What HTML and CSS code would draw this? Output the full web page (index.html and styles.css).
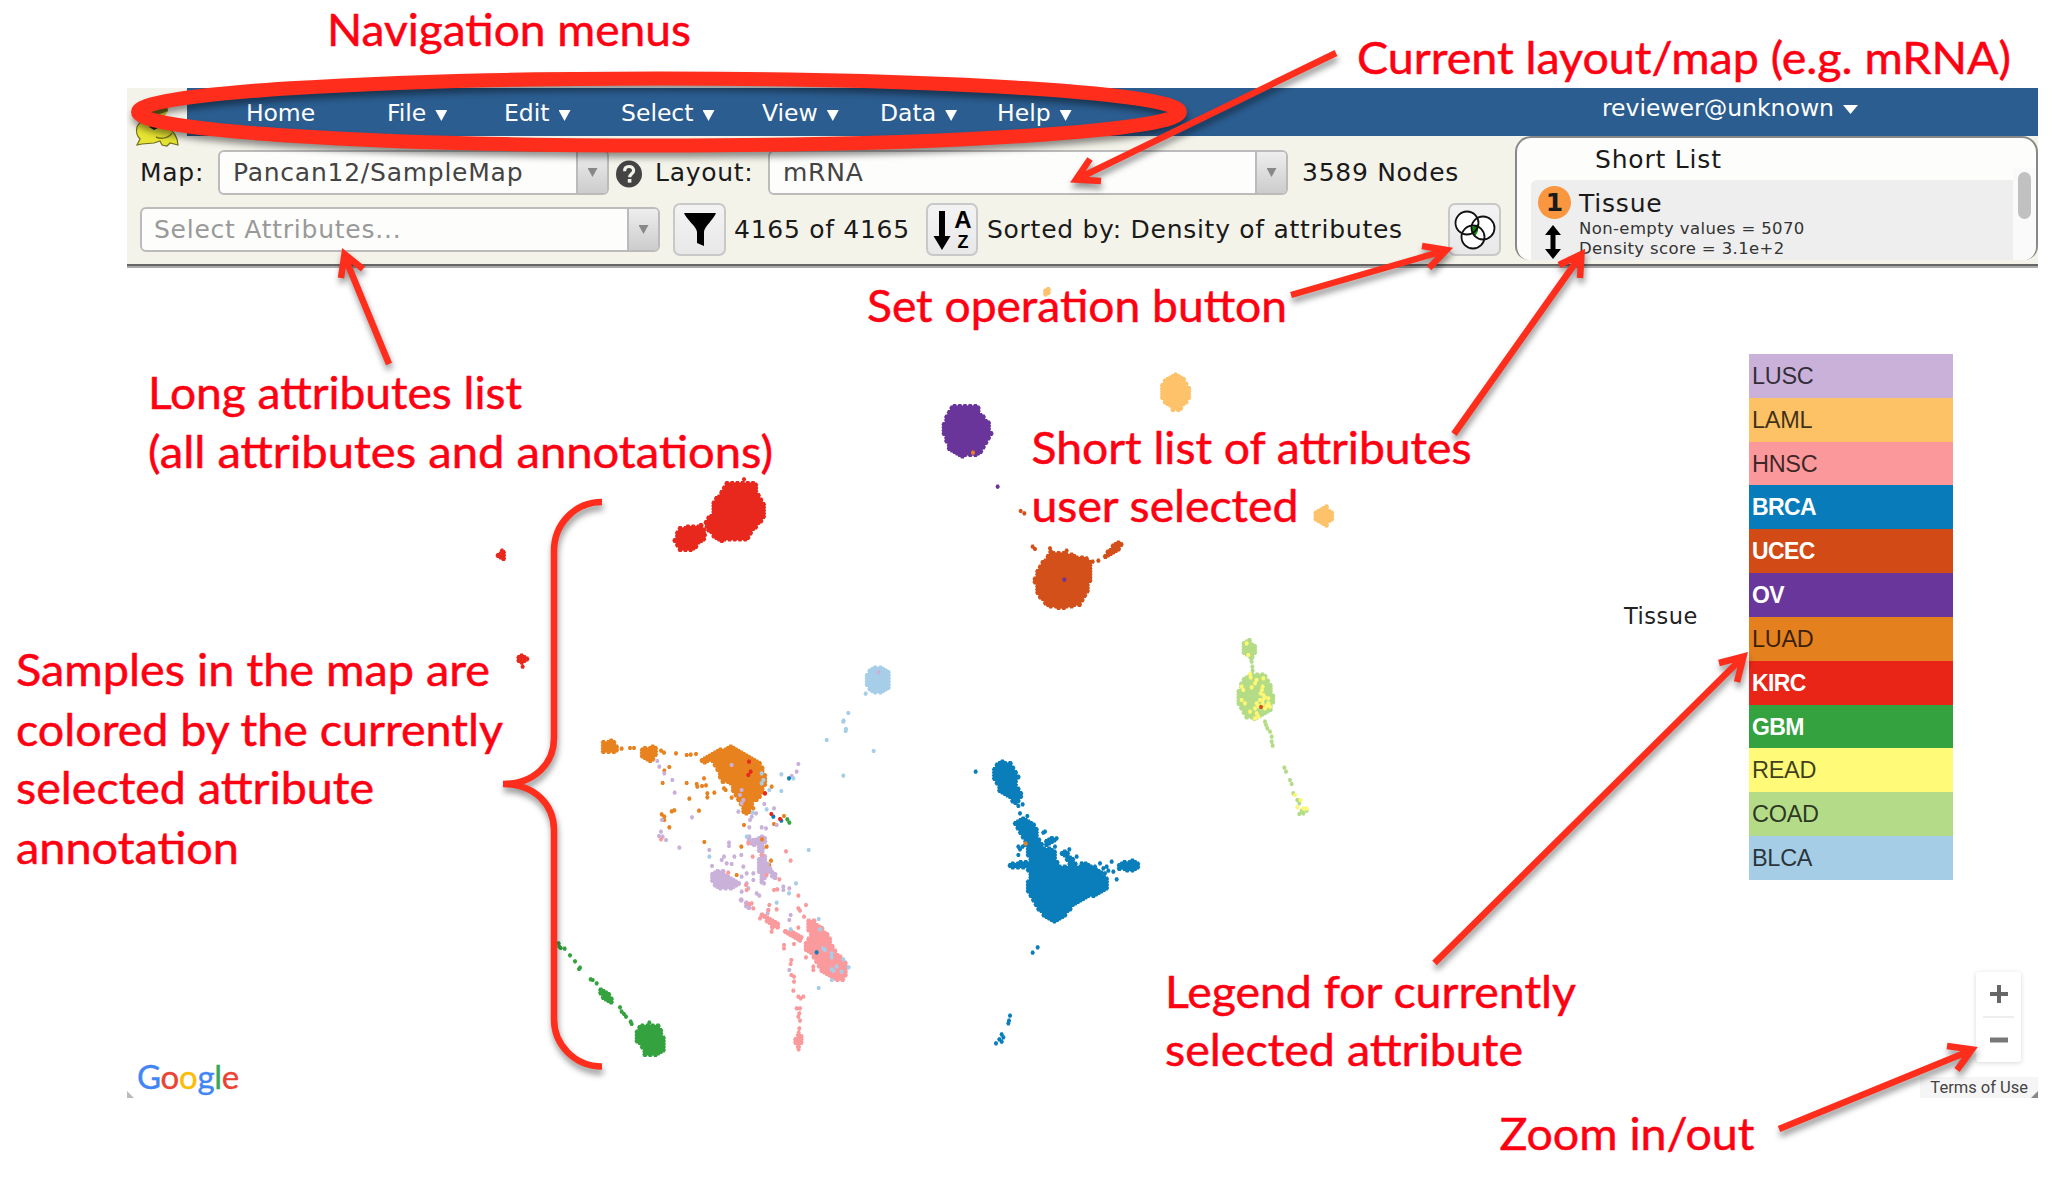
FILE: index.html
```html
<!DOCTYPE html>
<html lang="en">
<head>
<meta charset="utf-8">
<title>Tumor Map</title>
<link rel="stylesheet" href="styles.css">
</head>
<body>
<main class="page">
  <div class="app">
    <header class="header">
      <div class="topbar">
        <nav class="nav">
          <a class="nav-item home">Home</a>
          <a class="nav-item file">File<i class="caret"></i></a>
          <a class="nav-item edit">Edit<i class="caret"></i></a>
          <a class="nav-item select">Select<i class="caret"></i></a>
          <a class="nav-item view">View<i class="caret"></i></a>
          <a class="nav-item data">Data<i class="caret"></i></a>
          <a class="nav-item help">Help<i class="caret"></i></a>
        </nav>
        <div class="user">reviewer@unknown<i class="caret user-caret"></i></div>
      </div>
      <div class="toolbar">
        <div class="controls">
          <div class="row row-map">
            <span class="label map-label">Map:</span>
            <div class="combo combo-map"><span class="value">Pancan12/SampleMap</span><span class="drop"><i></i></span></div>
            <svg class="help-icon" viewBox="0 0 26 28"><ellipse cx="13" cy="14" rx="13" ry="13.5" fill="#444"/><path d="M8.6 11.2C8.6 7.8 10.5 6.5 13 6.5s4.600 1.500 4.600 4.200c0 3-3.900 3.200-3.900 6.500" fill="none" stroke="#f4f3ea" stroke-width="3.200"/><rect x="11.800" y="19" width="3.600" height="3.600" fill="#f4f3ea"/></svg>
            <span class="label layout-label">Layout:</span>
            <div class="combo combo-layout"><span class="value">mRNA</span><span class="drop"><i></i></span></div>
            <span class="label nodes">3589 Nodes</span>
          </div>
          <div class="row row-attr">
            <div class="combo combo-attr"><span class="value placeholder">Select Attributes...</span><span class="drop"><i></i></span></div>
            <button class="btn filter"><svg viewBox="0 0 32 34" width="32" height="34"><path d="M0 0H32C30 6 20 14 20 19V33L13 30V19C13 14 2 6 0 0Z"/></svg></button>
            <span class="label count">4165 of 4165</span>
            <button class="btn sort"><svg viewBox="0 0 20 42" width="20" height="42"><path d="M7 2H13V27H18.500L10 41 1.500 27H7Z"/></svg><span class="sort-letters"><b class="sort-a">A</b><b class="sort-z">Z</b></span></button>
            <span class="label sorted">Sorted by: Density of attributes</span>
            <button class="btn venn"><svg viewBox="0 0 42 40" width="42" height="40"><circle cx="13" cy="13" r="11.500" fill="#fff"/><circle cx="29" cy="18" r="11.500" fill="#fff"/><circle cx="19" cy="27" r="11.500" fill="#fff"/><path d="M17.600 17.500 24.500 13.800 24 21 21.500 26 17.800 22.500Z" fill="#0a8a0a"/><g fill="none" stroke="#111" stroke-width="1.800"><circle cx="13" cy="13" r="11.500"/><circle cx="29" cy="18" r="11.500"/><circle cx="19" cy="27" r="11.500"/></g></svg></button>
          </div>
        </div>
        <section class="shortlist">
          <h2 class="shortlist-title">Short List</h2>
          <div class="shortlist-body">
            <article class="entry">
              <div class="entry-icons">
                <span class="badge">1</span>
                <svg class="updown" viewBox="0 0 18 34" width="18" height="34"><path d="M9 0 17 10H11.500V24H17L9 34 1 24H6.500V10H1Z"/></svg>
              </div>
              <div class="entry-text">
                <div class="entry-name">Tissue</div>
                <div class="entry-meta m1">Non-empty values = 5070</div>
                <div class="entry-meta m2">Density score = 3.1e+2</div>
              </div>
            </article>
            <div class="scroll"><div class="thumb"></div></div>
          </div>
        </section>
      </div>
    </header>
    <div class="map">
      <div class="legend">
        <div class="legend-title">Tissue</div>
        <div class="legend-rows">
          <div class="lg lusc">LUSC</div>
          <div class="lg laml">LAML</div>
          <div class="lg hnsc">HNSC</div>
          <div class="lg brca strong">BRCA</div>
          <div class="lg ucec strong">UCEC</div>
          <div class="lg ov strong">OV</div>
          <div class="lg luad">LUAD</div>
          <div class="lg kirc strong">KIRC</div>
          <div class="lg gbm strong">GBM</div>
          <div class="lg read">READ</div>
          <div class="lg coad">COAD</div>
          <div class="lg blca">BLCA</div>
        </div>
      </div>
      <div class="zoom">
        <button class="zoom-btn"><svg viewBox="0 0 18 18" width="18" height="18"><path d="M7 0H11V7H18V11H11V18H7V11H0V7H7Z" fill="#666"/></svg></button>
        <button class="zoom-btn"><svg viewBox="0 0 18 18" width="18" height="18"><path d="M0 6.500H18V11.500H0Z" fill="#777"/></svg></button>
      </div>
      <div class="google"><span class="g-b">G</span><span class="g-r">o</span><span class="g-y">o</span><span class="g-b">g</span><span class="g-g">l</span><span class="g-r">e</span></div>
      <div class="terms">Terms of Use</div>
      <i class="corner"></i>
      <i class="corner corner-right"></i>
    </div>
  </div>
  <svg class="frog" viewBox="0 0 46 54"><path d="M13 22C13 14 20 12 24 8 30 6 36 12 34 18L30 24Z" fill="#c9c431"/><path d="M14 20 33 14 34 18 18 24Z" fill="#6d6a1c"/><path d="M3 34C6 26 18 26 28 31 36 34 40 38 43 46L44 52 36 50 33 53 28 52 26 48 20 50 8 51 3 52 6 46C2 42 2 38 3 34Z" fill="#e6e332" stroke="#6f6d20" stroke-width="1.200"/><path d="M18 31 26 34 20 37 15 34Z" fill="#222"/><path d="M22 44C28 47 36 44 38 40" fill="none" stroke="#77751f" stroke-width="1.500"/></svg>
  <svg class="overlay" id="samples" viewBox="0 0 2058 1192"></svg>
  <svg class="overlay" viewBox="0 0 2058 1192">
    <g class="marks">
      <ellipse cx="659" cy="112" rx="521" ry="33.500" stroke-width="14"/>
      <path d="M1336 53 1077 179M1090 159 1076 179.500 1101 181"/>
      <path d="M1291 295 1447 250M1422 246 1446.500 250 1429 268"/>
      <path d="M1454 434 1581 255M1559 265 1581.500 254 1580 278"/>
      <path d="M389 364 344 255M363 269 344.500 254 341 278"/>
      <path d="M1434.500 963 1743 657M1719 663 1743.500 656.500 1737 682"/>
      <path d="M1779 1129 1972 1050M1947 1046 1972 1049.500 1957 1070"/>
      <path d="M602 502C575 502 554 524 554 551V738C554 763 535 784 503 784 535 784 554 805 554 830V1019C554 1045 575 1066.500 602 1066.500"/>
    </g>
    <g class="notes">
      <text x="327" y="46" textLength="364" lengthAdjust="spacingAndGlyphs">Navigation menus</text>
      <text x="1357" y="73.500" textLength="654" lengthAdjust="spacingAndGlyphs">Current layout/map (e.g. mRNA)</text>
      <text x="867" y="321.500" textLength="420" lengthAdjust="spacingAndGlyphs">Set operation button</text>
      <text x="148" y="409" textLength="374" lengthAdjust="spacingAndGlyphs">Long attributes list</text>
      <text x="148" y="467.500" textLength="625" lengthAdjust="spacingAndGlyphs">(all attributes and annotations)</text>
      <text x="1031.500" y="464" textLength="440" lengthAdjust="spacingAndGlyphs">Short list of attributes</text>
      <text x="1031.500" y="522" textLength="267" lengthAdjust="spacingAndGlyphs">user selected</text>
      <text x="16" y="685.500" textLength="474" lengthAdjust="spacingAndGlyphs">Samples in the map are</text>
      <text x="16" y="745.500" textLength="487" lengthAdjust="spacingAndGlyphs">colored by the currently</text>
      <text x="16" y="803.500" textLength="358" lengthAdjust="spacingAndGlyphs">selected attribute</text>
      <text x="16" y="863.500" textLength="223" lengthAdjust="spacingAndGlyphs">annotation</text>
      <text x="1165" y="1007.500" textLength="411" lengthAdjust="spacingAndGlyphs">Legend for currently</text>
      <text x="1165" y="1065.500" textLength="358" lengthAdjust="spacingAndGlyphs">selected attribute</text>
      <text x="1499.500" y="1149.500" textLength="255" lengthAdjust="spacingAndGlyphs">Zoom in/out</text>
    </g>
  </svg>
</main>
<script src="samples.js"></script>
</body>
</html>
```
FILE: styles.css
```css
* { box-sizing: border-box; }
body { margin: 0; background: #fff; }
.page { position: relative; width: 2058px; height: 1192px; overflow: hidden; padding: 88px 20px 0 127px; font-family: "DejaVu Sans", Verdana, sans-serif; color: #1a1a1a; }
.app { width: 1911px; height: 1010px; display: flex; flex-direction: column; }
.header { height: 180px; flex: none; background: #f4f3ea; border-bottom: 2px solid #aaa; box-shadow: inset 0 -2px 0 #666; }
.topbar { height: 48px; margin-left: 60px; background: #2b5d90; color: #fff; display: flex; justify-content: space-between; }
.nav { display: flex; padding-left: 59px; }
.nav-item { display: flex; gap: 9px; font-size: 23.5px; line-height: 50px; white-space: nowrap; }
.home { width: 141px; letter-spacing: -0.1px; }
.file { width: 117px; }
.edit { width: 117px; }
.select { width: 141px; }
.view { width: 118px; }
.data { width: 117px; }
.caret { width: 12px; height: 11px; margin-top: 22px; background: #fff; clip-path: polygon(0 0, 100% 0, 50% 100%); }
.user { display: flex; gap: 9px; padding-right: 180px; font-size: 23.5px; line-height: 41px; }
.user-caret { width: 15px; height: 9px; margin-top: 17px; }
.toolbar { display: flex; height: 130px; }
.controls { width: 1388px; flex: none; }
.row { display: flex; align-items: center; white-space: nowrap; }
.row-map { padding: 13px 0 0 13px; height: 60px; }
.row-attr { padding-left: 13px; height: 61px; margin-top: 2px; }
.label { font-size: 25px; line-height: 44px; flex: none; letter-spacing: 0.72px; }
.map-label { width: 78px; }
.layout-label { width: 113px; margin-left: 13px; }
.nodes { margin-left: 14px; }
.combo { display: flex; flex: none; height: 45px; border: 2px solid #bbb; border-radius: 6px; background: #fdfdfc; overflow: hidden; }
.combo-map { width: 391px; }
.combo-layout { width: 520px; }
.combo-attr { width: 520px; margin-top: 2px; }
.value { flex: 1; padding-left: 13px; font-size: 25px; line-height: 42px; color: #444; letter-spacing: 0.75px; }
.placeholder { color: #999; padding-left: 12px; }
.drop { width: 31px; border-left: 2px solid #bbb; background: linear-gradient(#eee, #ccc); display: flex; align-items: center; justify-content: center; }
.drop i { width: 10px; height: 9px; background: #888; clip-path: polygon(0 0, 100% 0, 50% 100%); }
.help-icon { width: 26px; height: 28px; margin: 2px 0 0 7px; flex: none; }
.btn { flex: none; height: 53px; width: 53px; margin-top: 2px; padding: 0; border: 2px solid #c8c8c8; border-radius: 7px; background: linear-gradient(#f3f3f3, #e8e8e8); display: flex; align-items: center; justify-content: center; }
.filter { margin-left: 13px; }
.count { margin-left: 8px; width: 192px; padding-top: 2px; }
.sort { width: 52px; }
.sort svg { flex: none; }
.sort-letters { display: flex; flex-direction: column; align-items: center; width: 21px; padding-left: 2px; font-family: "Liberation Sans", Arial, sans-serif; }
.sort-a { font-size: 24px; line-height: 25px; }
.sort-z { font-size: 18px; line-height: 20px; }
.sorted { margin-left: 9px; width: 461px; padding-top: 2px; }
.shortlist { width: 523px; height: 124px; border: 2px solid #888; border-bottom: 0; border-radius: 16px 16px 14px 14px; background: #fdfdfb; display: flex; flex-direction: column; overflow: hidden; }
.shortlist-title { margin: 0; padding-left: 78px; height: 42px; font-size: 25px; line-height: 44px; font-weight: 400; letter-spacing: 0.8px; }
.shortlist-body { display: flex; flex: 1; padding-left: 14px; }
.entry { display: flex; width: 482px; background: #eee; border-top-left-radius: 6px; }
.entry-icons { width: 48px; padding: 6px 0 0 7px; display: flex; flex-direction: column; align-items: flex-start; }
.badge { width: 33px; height: 33px; border-radius: 50%; background: #f9963f; font-weight: 700; font-size: 25px; line-height: 33px; text-align: center; flex: none; }
.updown { margin: 6px 0 0 6px; flex: none; }
.entry-name { font-size: 25px; line-height: 30px; padding-top: 9px; letter-spacing: 0.8px; }
.entry-meta { font-size: 16.5px; line-height: 19.5px; color: #333; white-space: nowrap; letter-spacing: 0.38px; }
.scroll { margin: -12px 0 0 0; width: 23px; background: #fafafa; padding: 4px 0 0 5px; }
.thumb { width: 13px; height: 47px; border-radius: 7px; background: #c1c1c1; }
.map { flex: 1; position: relative; background: #fff; }
.legend { position: absolute; left: 1497px; top: 86px; height: 526px; display: flex; align-items: center; }
.legend-title { width: 125px; font-size: 22.5px; color: #222; letter-spacing: 0.5px; padding-bottom: 3px; }
.legend-rows { width: 204px; height: 526px; display: flex; flex-direction: column; }
.lg { flex: 1 1 0; min-height: 0; padding: 1px 0 0 3px; font: 23.5px/42px "Liberation Sans", Arial, sans-serif; letter-spacing: -0.3px; color: rgba(0,0,0,.76); }
.strong { color: #fff; font-weight: 700; font-size: 23px; letter-spacing: -0.6px; }
.lusc { background: #c9b1da; } .laml { background: #fdc166; } .hnsc { background: #fb989b; }
.brca { background: #087cbb; } .ucec { background: #d24a16; } .ov { background: #69369b; }
.luad { background: #e5801f; } .kirc { background: #e92518; } .gbm { background: #33a23f; }
.read { background: #fffa77; } .coad { background: #b3db88; } .blca { background: #a5cee6; }
.zoom { position: absolute; left: 1849px; top: 704px; width: 45px; height: 90px; display: flex; flex-direction: column; background: #fff; border-radius: 3px; box-shadow: 0 1px 5px rgba(0,0,0,.16); }
.zoom-btn { flex: 1; margin: 0 7px; padding: 0; border: 0; background: none; display: flex; align-items: center; justify-content: center; }
.zoom-btn + .zoom-btn { border-top: 2px solid #eee; }
.google { position: absolute; left: 10px; top: 788px; font: 33px/40px Lato, sans-serif; letter-spacing: -0.3px; -webkit-text-stroke: 0.4px; }
.g-b { color: #4285f4; } .g-r { color: #ea4335; } .g-y { color: #fbbc05; } .g-g { color: #34a853; }
.terms { position: absolute; right: 0; bottom: 0; width: 118px; height: 21px; padding-right: 10px; text-align: right; background: #f5f5f5; font: 16.5px/21px Roboto, sans-serif; color: #444; white-space: nowrap; }
.corner { position: absolute; left: 0; bottom: 0; width: 7px; height: 7px; background: #bbb; clip-path: polygon(0 0, 100% 100%, 0 100%); }
.corner-right { left: auto; right: 0; background: #888; clip-path: polygon(100% 0, 100% 100%, 0 100%); }
.frog { position: absolute; left: 134px; top: 93px; width: 46px; height: 54px; }
.overlay { position: absolute; left: 0; top: 0; width: 2058px; height: 1192px; pointer-events: none; }
.marks { fill: none; stroke: #ff2d1c; stroke-width: 6.5; filter: drop-shadow(1px 5px 3px rgba(0,0,0,.42)); }
.notes { fill: #ff0012; font: 44.5px Lato, Carlito, Calibri, sans-serif; stroke: #ff0012; stroke-width: .5; }
```
FILE: samples.js
```js
// Sample positions, grouped in tiles. Tile coordinates are three units per pixel.
const colors = {
  luad: '#e8821e', lusc: '#c9b1da', hnsc: '#fb9a9c', gbm: '#33a23f', blca: '#a6cee8', brca: '#0a7dbb',
  kirc: '#e8281d', ov: '#6a359b', laml: '#fdc26a', ucec: '#d4501a', coad: '#b4dc87', read: '#fdf774'
};
const tiles = [
  { x: 480, y: 470, groups: [
    ['kirc', ['740,38 825,38 832,65 857,108 850,145 828,170 803,208 720,212 690,190 675,155 700,130 702,95 718,75', '600,172 645,168 665,160 680,200 655,222 635,242 600,242 582,212', '55,250 66,240 78,258 68,272 52,262', '110,566 128,550 147,566 130,582'], '66,242 128,590 792,28 672,180 680,170 675,195'],
    ['blca', ['1175,592 1210,592 1228,605 1226,655 1190,672 1165,660 1156,628'], '1157,671 1105,729 1091,752 1098,777'],
    ['lusc', [], '1196,607']
  ]},
  { x: 580, y: 720, groups: [
    ['luad', ['68,68 88,60 108,70 112,95 70,95', '182,82 228,80 232,105 208,128 183,112', '395,100 450,78 500,100 545,135 560,185 545,225 520,245 512,280 495,285 480,250 465,225 450,185 425,188 415,155 400,125 360,128 370,115'],
      '125,86 150,84 162,84 243,92 252,98 288,100 320,105 332,104 348,102 253,152 268,141 248,189 320,189 350,192 352,200 372,175 378,196 366,198 382,232 382,220 403,218 328,236 357,272 432,205 437,210 455,233 268,322 245,283 253,290 253,300 275,274 283,271 373,366 492,315 484,380 573,422 568,435 575,200 555,220 520,265 530,240 612,288 582,312'],
    ['lusc', ['395,455 430,450 445,470 470,480 488,490 460,508 425,508 398,490', '535,350 555,350 552,400 565,440 595,475 580,478 560,450 548,500 540,470 535,430 540,400 530,375 505,370 502,345 515,365', '475,530 490,545 515,555 510,567 480,545'],
      '232,123 238,140 253,160 277,180 284,218 336,292 246,300 243,335 248,350 258,360 237,348 298,383 447,368 447,378 388,390 396,438 432,410 463,410 484,405 440,430 455,432 425,420 485,210 480,225 490,240 485,250 475,275 515,290 510,300 508,322 545,322 558,325 528,280 553,252 582,265 590,315 655,132 650,155 635,168 455,135 490,440 500,460 485,470 520,460 520,480 505,505 500,490 530,520 538,527 485,515 610,500 610,510 628,505 565,570 563,580 632,585 628,600 628,750 540,420 550,430 558,460 540,455 545,480 552,490 575,455 520,360 530,365 545,370 550,385 508,350'],
    ['hnsc', ['683,600 700,600 745,645 760,685 795,725 802,765 785,782 755,775 735,765 710,730 690,700 675,685 680,660 690,645 680,615', '540,578 570,595 600,610 595,630 575,620 555,600', '610,628 640,635 665,650 670,662 650,660 620,640', '640,960 655,940 672,960 658,985'],
      '243,358 445,458 498,495 500,510 518,410 505,370 545,405 598,478 582,510 592,508 618,394 632,422 560,465 505,552 515,550 520,565 568,555 565,570 590,568 655,527 655,565 660,572 678,555 672,590 540,595 575,635 655,623 612,675 612,685 642,672 660,662 678,712 700,740 700,750 634,720 632,732 634,765 642,770 642,785 640,812 655,830 662,835 670,830 650,865 660,865 658,880 655,890 660,902 658,925 656,938 656,988'],
    ['gbm', ['165,945 180,915 240,915 245,945 258,965 250,990 238,1008 195,1008 182,975 165,970', '55,805 75,808 95,835 105,860 90,850 60,825'],
      '-64,670 -62,680 -58,684 -46,686 -30,706 -15,724 -3,747 0,743 32,778 38,780 50,790 120,862 125,875 132,882 138,890 152,905 155,912 208,908 622,298 628,308'],
    ['blca', [], '790,5 797,33 740,60 881,93 790,167 604,163 604,213 640,175 568,210 560,268 388,410 500,350 518,278 686,390 648,490 627,520 590,548 716,597 720,628 632,628 730,685 735,690 755,700 755,712 790,718 806,742 785,755 755,748 760,752 770,740 755,780 716,804 545,160 550,180 545,190'],
    ['brca', [], '627,175 604,302 580,290 710,697'],
    ['luad', [], '546,358 560,380 470,465'],
    ['kirc', [], '507,125 512,155 505,165 555,220 574,282 600,297']
  ]},
  { x: 900, y: 360, groups: [
    ['ov', ['155,138 238,138 242,160 268,190 275,225 262,240 242,280 225,285 175,290 150,270 132,225 128,198 142,160'], '293,380'],
    ['laml', ['785,70 822,42 850,55 875,95 865,120 840,150 820,150 790,125 782,95', '1245,455 1275,435 1305,468 1278,500 1245,480', '428,-205 440,-216 453,-205 440,-190'], ''],
    ['ucec', ['450,575 480,578 500,580 540,590 575,610 572,660 560,700 540,735 490,745 445,740 415,705 403,665 415,625 430,605', '612,590 625,568 650,548 665,550 655,572 630,590'], '362,453 373,460 398,560 405,567 450,565 500,572 560,595 595,602 578,605'],
    ['ov', [], '493,659'], ['luad', [], '219,278']
  ]},
  { x: 940, y: 600, groups: [
    ['coad', ['905,135 925,115 945,140 950,150 938,172 912,165', '895,290 900,250 930,222 975,225 990,250 1002,295 990,335 950,360 915,350 895,315'], '933,175 935,185 937,200 938,212 975,365 978,375 982,385 990,395 995,410 995,425 998,437 1033,503 1038,515 1050,540 1055,552 1060,580 1072,600 1078,610 1085,632 1078,642 1090,640 1100,632'],
    ['read', [], '930,222 932,232 905,260 910,270 945,250 968,260 962,280 970,285 985,295 960,300 950,310 985,310 975,325 990,320 945,325 950,340 930,335 915,310 905,300 955,350 945,355 970,235 950,240 966,270 975,292 968,300 955,318 980,318 968,312 935,262 1065,585 1082,600 1072,622 1090,625 1100,626 925,165 920,130'],
    ['ucec', [], '963,321'],
    ['brca', ['158,505 185,482 215,490 225,515 235,530 230,560 245,575 240,610 225,610 205,590 180,575 170,545 158,530',
      '225,670 250,650 275,665 292,690 300,730 320,745 345,750 352,790 365,800 390,800 385,770 410,800 440,785 460,800 500,830 503,865 465,885 430,898 400,920 375,945 340,965 320,955 290,925 270,885 258,870 268,830 262,805 240,805 205,800 205,790 255,785 270,790 262,750 255,725 240,695',
      '310,725 335,708 345,720 325,740', '355,750 380,755 400,775 410,800 395,808 380,780', '530,790 555,785 580,780 600,792 590,812 560,812 535,808'],
      '107,515 235,618 248,613 240,640 262,648 310,698 315,695 350,715 345,740 388,748 410,770 235,740 240,748 235,765 248,740 480,790 490,805 500,800 505,812 515,785 520,815 530,838 293,1042 278,1058 210,1247 207,1262 205,1270 185,1303 190,1312 178,1318 185,1325 168,1330 495,820 465,800 425,790'],
    ['luad', [], '257,731']
  ]}
];

const parse = s => s ? s.split(' ').map(p => p.split(',').map(Number)) : [];
const inside = (x, y, poly) => {
  let hit = false;
  for (let i = 0, j = poly.length - 1; i < poly.length; j = i++) {
    const [xi, yi] = poly[i], [xj, yj] = poly[j];
    if ((yi > y) !== (yj > y) && x < (xj - xi) * (y - yi) / (yj - yi) + xi) hit = !hit;
  }
  return hit;
};
const hex = (x, y, w, h) => `M${x - w} ${y}l${w / 2} ${-h}h${w}l${w / 2} ${h}l${-w / 2} ${h}h${-w}z`;

const layer = document.getElementById('samples');
for (const t of tiles) {
  for (const [type, areas, dots] of t.groups) {
    let d = '';
    // Filled areas are tiled with hexagonal cells in staggered columns.
    for (const area of areas.map(parse)) {
      const xs = area.map(p => p[0]), ys = area.map(p => p[1]);
      for (let c = Math.floor(Math.min(...xs) / 7.8); c * 7.8 <= Math.max(...xs); c++) {
        for (let r = Math.floor(Math.min(...ys) / 9); r * 9 <= Math.max(...ys); r++) {
          const x = c * 7.8, y = r * 9 + (c & 1 ? 4.5 : 0);
          if (inside(x, y, area)) d += hex(t.x + x / 3, t.y + y / 3, 2.75, 2.4);
        }
      }
    }
    for (const [x, y] of parse(dots)) d += hex(t.x + x / 3, t.y + y / 3, 2.2, 2.1);
    const path = document.createElementNS('http://www.w3.org/2000/svg', 'path');
    path.setAttribute('d', d);
    path.setAttribute('fill', colors[type]);
    layer.appendChild(path);
  }
}
```
